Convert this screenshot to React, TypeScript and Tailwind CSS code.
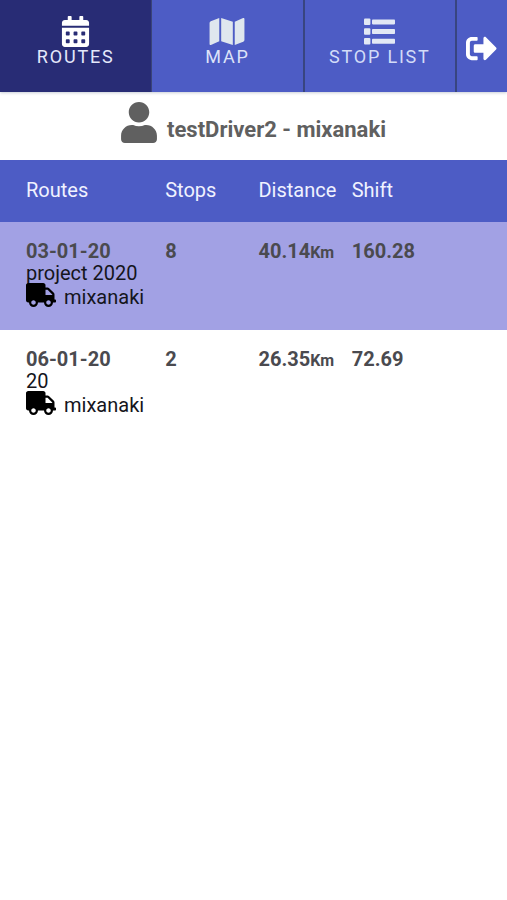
import {
  FaCalendarAlt,
  FaMap,
  FaSignOutAlt,
  FaTruck,
  FaUser,
} from "react-icons/fa";

const routes = [
  {
    date: "03-01-20",
    project: "project 2020",
    driver: "mixanaki",
    stops: 8,
    distance: "40.14",
    shift: "160.28",
    selected: true,
  },
  {
    date: "06-01-20",
    project: "20",
    driver: "mixanaki",
    stops: 2,
    distance: "26.35",
    shift: "72.69",
    selected: false,
  },
];

function ListIcon() {
  return (
    <svg viewBox="0 0 31 31" className="h-[31px] w-[31px]" fill="currentColor">
      <rect x="0" y="2.5" width="6.4" height="6.4" rx="1" />
      <rect x="0" y="12.3" width="6.4" height="6.4" rx="1" />
      <rect x="0" y="22" width="6.4" height="6.4" rx="1" />
      <rect x="8" y="3.4" width="23" height="5" rx="0.8" />
      <rect x="8" y="13.1" width="23" height="5" rx="0.8" />
      <rect x="8" y="22.8" width="23" height="5" rx="0.8" />
    </svg>
  );
}

function NavBar() {
  return (
    <nav className="grid h-[92px] grid-cols-[1fr_1fr_1fr_50px] bg-[#4d5cc5] text-lg leading-5 tracking-widest text-[#dce2f8] shadow-sm shadow-gray-300">
      <button className="flex flex-col items-center border-r border-[#3a4478] bg-[#282c75] pt-4 text-[#e4e8fb]">
        <FaCalendarAlt size={31} className="text-white" />
        <span>ROUTES</span>
      </button>
      <button className="flex flex-col items-center border-r-2 border-[#384580] pt-4">
        <FaMap size={31} className="w-9 text-[#dfe7ee]" />
        <span>MAP</span>
      </button>
      <button className="flex flex-col items-center border-r-2 border-[#384580] pt-4 text-[#d3dcf8]">
        <span className="text-[#e2e8f5]">
          <ListIcon />
        </span>
        <span>STOP LIST</span>
      </button>
      <button
        aria-label="Sign out"
        className="flex items-center justify-center pt-1 text-white"
      >
        <FaSignOutAlt size={31} />
      </button>
    </nav>
  );
}

function RoutesTable() {
  return (
    <table className="w-full table-fixed text-left text-xl leading-[22px]">
      <colgroup>
        <col className="w-[31%]" />
        <col className="w-[18.4%]" />
        <col className="w-[18.4%]" />
        <col />
      </colgroup>
      <thead className="bg-[#4d5cc5] text-[#f0f2ff]">
        <tr className="h-[62px]">
          <th className="pb-[2px] pl-[26px] font-normal">Routes</th>
          <th className="pb-[2px] pl-2 font-normal">Stops</th>
          <th className="pb-[2px] pl-2 font-normal">Distance</th>
          <th className="pb-[2px] pl-2 font-normal">Shift</th>
        </tr>
      </thead>
      <tbody>
        {routes.map((route) => (
          <tr
            key={route.date}
            className={
              route.selected ? "bg-[#a2a1e4] align-top" : "bg-white align-top"
            }
          >
            <td className="pt-[18px] pb-5 pl-[26px] text-[#15151c]">
              <div className="font-bold text-[#4a4a4f]">{route.date}</div>
              <div>{route.project}</div>
              <div className="flex h-[26px] items-start gap-2">
                <FaTruck size={30} className="-mt-1 text-black" />
                <span className="pt-[2px]">{route.driver}</span>
              </div>
            </td>
            <td className="pt-[18px] pl-2 font-bold text-[#4a4a4f]">
              {route.stops}
            </td>
            <td className="pt-[18px] pl-2 font-bold text-[#4a4a4f]">
              {route.distance}
              <span className="text-base leading-none">Km</span>
            </td>
            <td className="pt-[18px] pl-2 font-bold text-[#4a4a4f]">
              {route.shift}
            </td>
          </tr>
        ))}
      </tbody>
    </table>
  );
}

export default function App() {
  return (
    <div className="min-h-screen bg-white font-[Roboto,sans-serif]">
      <NavBar />
      <div className="flex h-[68px] items-center justify-center gap-[10px] pb-2 text-[#606060]">
        <FaUser size={41} className="w-9" />
        <h1 className="pt-4 text-[22px] leading-7 font-bold">
          testDriver2 - mixanaki
        </h1>
      </div>
      <RoutesTable />
    </div>
  );
}
